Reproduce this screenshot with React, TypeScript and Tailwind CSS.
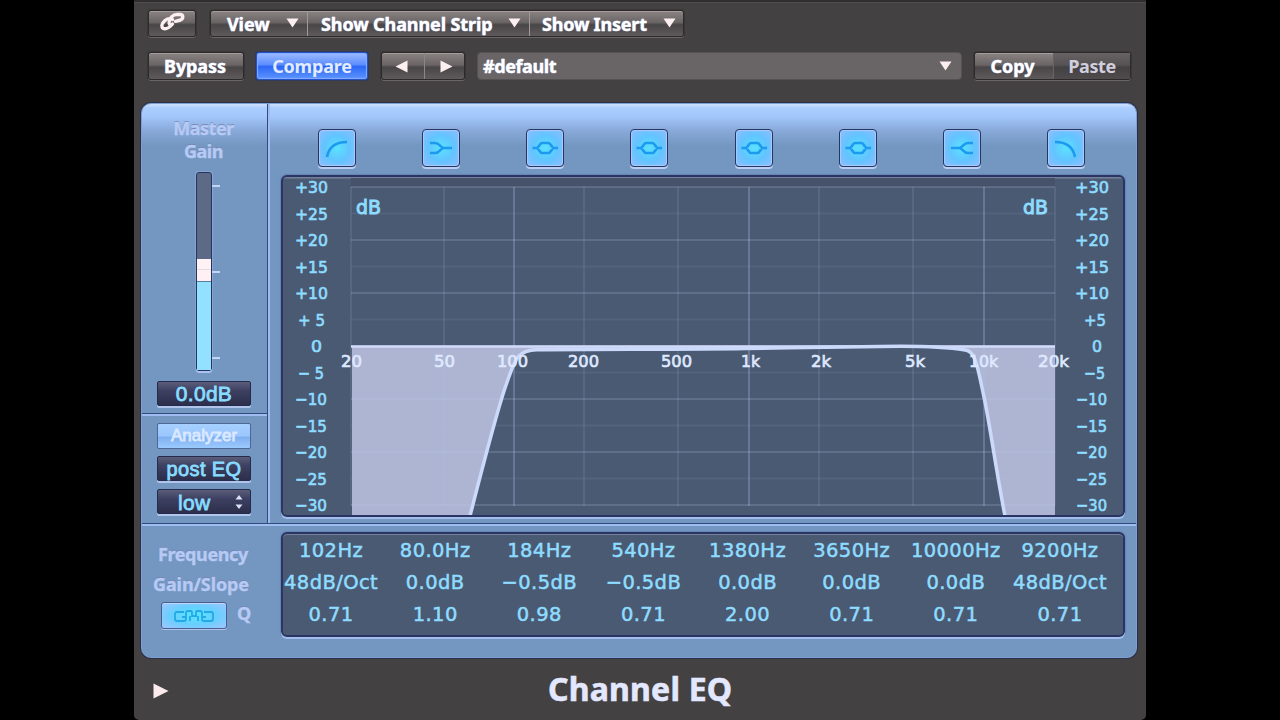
import type { ReactNode } from "react";

const RAISED =
  "flex items-center justify-center rounded-[3px] border border-[#2c2a2b] bg-[linear-gradient(180deg,#8b8384_0%,#6b6566_45%,#494647_55%,#5f5a5b_100%)] shadow-[inset_0_1px_0_#a59c9d,0_1px_0_#6a6667,0_0_0_1px_#393738]";
const TOOL_TEXT = "text-[18px] font-bold text-white [text-shadow:0_0_1px_#9fb7ff] [-webkit-text-stroke:0.3px_#ffffff]";
const LABEL = "font-bold text-[#b6caf5] [text-shadow:0_-1px_0_#7080ac] [-webkit-text-stroke:0.4px_#b6caf5]";
const FIELD =
  "flex h-[25px] w-[94px] items-center justify-center rounded-[2px] border border-[#252b4d] bg-[linear-gradient(180deg,#5b5d7a_0%,#3e4062_38%,#2c2e4b_100%)] font-['Liberation_Sans',sans-serif] text-[20px] leading-none text-[#88dcff] shadow-[0_2px_0_#b1c5ec] [-webkit-text-stroke:0.8px_#88dcff]";

const Down = () => (
  <svg width="13" height="10" viewBox="0 0 13 10">
    <path d="M0.5 0.5H12.5L6.5 9.5Z" fill="#fdeff0" />
  </svg>
);

const Side = ({ flip }: { flip?: boolean }) => (
  <svg width="13" height="13" viewBox="0 0 13 13" className={flip ? "rotate-180" : ""}>
    <path d="M0.5 0.5V12.5L12.5 6.5Z" fill="#fdeff0" />
  </svg>
);

function MenuItem({ label, className, text }: { label: string; className: string; text: string }) {
  return (
    <div className={`flex h-full items-center justify-between ${className}`}>
      <span className={`${TOOL_TEXT} ${text}`}>{label}</span>
      <span className="-mt-[2px] flex">
        <Down />
      </span>
    </div>
  );
}

function Toolbar() {
  return (
    <div className="flex h-[103px] flex-col pl-[14px] pt-[10px] leading-none">
      <div className="flex h-[27px]">
        <div className={`${RAISED} w-[48px]`}>
          <svg width="26" height="20" viewBox="0 0 26 20" fill="none" stroke="#fdeff0" strokeWidth="3.400" strokeLinecap="round" className="-mt-[3px]">
            <path d="M13.500 7.500C11 6 8.500 6.500 6 8.500L3.500 11.500C2 14 3 16.800 6 16.800C8.500 16.800 10.500 15.500 13.500 12" />
            <path d="M10.500 12C9.500 10 11 6.500 13 4.500C14.500 2.800 16 2.500 18 2.500H21.500C24.500 3 24.500 7 21.500 8L16.500 9.300" />
          </svg>
        </div>
        <div className={`${RAISED} ml-[14px] w-[474px]`}>
          <MenuItem label="View" className="w-[97px] border-r border-[#a09899] pl-[16px] pr-[8px]" text="tracking-[-0.1px]" />
          <MenuItem label="Show Channel Strip" className="w-[222px] border-r border-[#a09899] pl-[13px] pr-[8px]" text="tracking-[-0.1px]" />
          <MenuItem label="Show Insert" className="flex-1 pl-[12px] pr-[7px]" text="tracking-[-0.2px]" />
        </div>
      </div>
      <div className="mt-[15px] flex h-[28px]">
        <div className={`${RAISED} ${TOOL_TEXT} w-[96px] pb-px pr-[2px] tracking-[-0.1px]`}>Bypass</div>
        <div className="ml-[12px] flex w-[112px] items-center justify-center rounded-[3px] border border-[#2450c8] bg-[linear-gradient(180deg,#9dbbff_0%,#5c8cff_45%,#2c68f5_52%,#5c94ff_100%)] pb-px text-[18px] font-bold tracking-[-0.2px] text-[#e3ecff] shadow-[inset_0_0_1px_1px_#86adff,0_0_0_1px_#303b5e]">
          Compare
        </div>
        <div className={`${RAISED} ml-[13px] w-[84px]`}>
          <span className="flex h-full w-[43px] items-center justify-center border-r border-[#8d8687] pr-[3px]"><Side flip /></span>
          <span className="flex flex-1 items-center justify-center pl-[3px]"><Side /></span>
        </div>
        <div className={`${TOOL_TEXT} ml-[12px] flex w-[485px] items-center justify-between rounded-[4px] border border-[#555152] bg-[#696465] pb-px pl-[5px] pr-[9px] tracking-[-0.4px]`}>
          <span>#default</span>
          <Down />
        </div>
        <div className={`${RAISED} ml-[12px] w-[157px]`}>
          <span className={`${TOOL_TEXT} w-[78px] pb-px pr-[3px] text-center tracking-[0px]`}>Copy</span>
          <span className="flex h-full flex-1 items-center justify-center border-l border-[#676263] bg-[linear-gradient(180deg,#676263_0%,#575354_45%,#434142_55%,#4f4b4c_100%)] pb-px text-[18px] font-bold tracking-[-0.4px] text-[#d1cfdf]">
            Paste
          </span>
        </div>
      </div>
    </div>
  );
}

function Fader() {
  return (
    <div className="ml-[54px] mt-[9px] flex h-[199px]">
      <div className="flex w-[16px] flex-col rounded-[3px] border border-[#26355f] bg-[#5c6a85] shadow-[0_2px_0_#abc3ee,0_0_1px_1px_#8ba6cf]">
        <div className="h-[86px]" />
        <div className="h-[22px] bg-[linear-gradient(180deg,#fff2f4_0_10px,#eadbe2_10px_11px,#fff0f3_11px)]" />
        <div className="flex-1 border-t border-[#5780a4] bg-[#92e1ff]" />
      </div>
      <div className="flex w-[8px] flex-col justify-between pb-[12px] pt-[13px]">
        <i className="h-[2px] bg-[#c3d5f6]" />
        <i className="h-[2px] bg-[#c3d5f6]" />
        <i className="h-[2px] bg-[#c3d5f6]" />
      </div>
    </div>
  );
}

function Sidebar() {
  return (
    <div className="flex w-[126px] flex-col border-r border-[#324a7c]">
      <div className="flex h-[310px] flex-col border-b border-[#324a7c]">
        <div className={`${LABEL} pr-[2px] pt-[13px] text-center text-[18px] leading-[22.500px] tracking-[-0.5px]`}>
          Master
          <br />
          Gain
        </div>
        <div className="pt-px">
          <Fader />
        </div>
        <div className={`${FIELD} ml-[15px] mt-[10px]`}>
          <span className="text-[21px] tracking-[0.3px]">0.0dB</span>
        </div>
      </div>
      <div className="flex flex-1 flex-col border-t-2 border-[#9fbdf0] pl-[15px] pt-[7px]">
        <div className="flex h-[26px] w-[94px] items-center justify-center rounded-[2px] border border-[#4e6796] bg-[linear-gradient(180deg,#a6d0ff_0%,#9bc6ff_50%,#7fb0ef_55%,#9ccaff_100%)] font-['Liberation_Sans',sans-serif] text-[17px] text-[#dbe9ff] [-webkit-text-stroke:0.8px_#dbe9ff]">
          Analyzer
        </div>
        <div className={`${FIELD} mt-[7px] tracking-[0.4px]`}>post EQ</div>
        <div className={`${FIELD} mt-[8px]`}>
          <span className="flex-1 pl-[20px] pt-px text-[21px] tracking-[0.3px]">low</span>
          <svg width="8" height="16" viewBox="0 0 8 16" fill="#dbe2f5" className="mr-[7px]">
            <path d="M4 1L7.500 5.500H0.500ZM4 15L7.500 10.500H0.500Z" />
          </svg>
        </div>
      </div>
    </div>
  );
}

const PEAK = "M5.500 18H9.500C12 18 12.500 13 15 13H21.500C24 13 24.500 18 27 18H31M9.500 18C12 18 12.500 23 15 23H21.500C24 23 24.500 18 27 18";
const FILTERS = [
  "M8 27C10 16 17 12 28 12",
  "M7 13H12C17 13 17 18 21 18H29M7 23H12C17 23 17 18 21 18",
  PEAK,
  PEAK,
  PEAK,
  PEAK,
  "M29 13H24C19 13 19 18 15 18H7M29 23H24C19 23 19 18 15 18",
  "M7 12C18 12 25 16 27 27",
];

function FilterButton({ d }: { d: string }) {
  return (
    <div className="flex h-[38px] w-[38px] items-center justify-center rounded-[4px] border border-[#27375f] bg-[radial-gradient(circle,#5ae2ff_0%,#62c4ff_50%,#8fbcff_100%)] shadow-[inset_0_0_1px_1px_#a9caff,0_2px_0_#bacdf2]">
      <svg width="36" height="36" viewBox="0 0 36 36" fill="none" stroke="#1b9af0" strokeWidth="2.600">
        <path d={d} />
      </svg>
    </div>
  );
}

const CYAN = "#8edcff";
const VLINES = [351, 444, 514, 584, 678, 749, 819, 913, 984, 1055];
const LEFT_DB: [string, number, number][] = [
  ["+30", 295, 328], ["+25", 295, 328], ["+20", 295, 328], ["+15", 295, 328], ["+10", 295, 328],
  ["+ 5", 298, 325], ["0", 311, 322], ["− 5", 298, 324], ["−10", 295, 327], ["−15", 295, 327],
  ["−20", 295, 327], ["−25", 295, 327], ["−30", 295, 327],
];
const RIGHT_DB: [string, number, number][] = [
  ["+30", 1075, 1109], ["+25", 1075, 1109], ["+20", 1075, 1109], ["+15", 1075, 1109], ["+10", 1075, 1109],
  ["+5", 1084, 1106], ["0", 1092, 1102], ["−5", 1084, 1105], ["−10", 1076, 1107], ["−15", 1076, 1107],
  ["−20", 1076, 1107], ["−25", 1076, 1107], ["−30", 1076, 1107],
];
const FREQS: [string, number, number][] = [
  ["20", 341, 362], ["50", 434, 455], ["100", 497, 528], ["200", 568, 599], ["500", 661, 692],
  ["1k", 741, 760], ["2k", 811, 831], ["5k", 905, 925], ["10k", 969, 998], ["20k", 1038, 1069],
];

type ScaleLabel = { item: [string, number, number]; y: number; size: number; fill: string; weight?: number };

const ScaleText = ({ item, y, size, fill, weight = 0.7 }: ScaleLabel) => (
  <text x={item[1]} y={y} textLength={item[2] - item[1]} lengthAdjust="spacingAndGlyphs" fontSize={size} fill={fill} stroke={fill} strokeWidth={weight} xmlSpace="preserve">
    {item[0]}
  </text>
);

function Chart() {
  return (
    <div className="h-[342px] w-[844px] overflow-hidden rounded-[6px] border-2 border-[#2b3564] bg-[#4a5a73] shadow-[0_2px_0_#a3bdec,0_0_1px_1px_#6683b2]">
      <svg width="840" height="338" viewBox="283 177 840 338" className="font-['DejaVu_Sans',sans-serif]">
        <rect x="283" y="177" width="840" height="1.500" fill="#77809b" />
        <rect x="351" y="178" width="704" height="9" fill="#46516a" />
        <path d="M352 346.500H1055V515H1005C996 470 990 425 984 397C978 370 976 350 965 349.500C945 346 905 346 880 346.500C830 347 790 347.500 745 348.500C690 349.500 600 349 545 349.500C516 350 515 360 505 388C495 418 480 475 470 515H352Z" fill="#adb5d2" />
        {VLINES.map((x) => (
          <rect key={x} x={x - 1} y="187" width="2" height="319" fill="#aebee8" opacity={x === 514 || x === 749 || x === 984 ? 0.3 : 0.13} />
        ))}
        {LEFT_DB.map((_, i) => (
          <rect key={i} x="351" y={186 + i * 26.500} width="704" height="2" fill="#c4d0f5" opacity={i % 2 === 0 ? 0.18 : 0.08} />
        ))}
        <path d="M351 346.500H1055" stroke="#d2dcfa" strokeWidth="2.500" />
        <path d="M470 516C480 477 495 418 505 388C515 360 516 350 537 349.700C600 349 690 349.500 745 348.500C790 347.500 830 347 880 346.500C905 346 940 346 965 350C976 350.500 978 370 984 397C990 425 996 470 1005 516" fill="none" stroke="#ccd9fb" strokeWidth="3.500" />
        {LEFT_DB.map((t, i) => <ScaleText key={i} item={t} y={193 + i * 26.500} size={16.500} fill={CYAN} />)}
        {RIGHT_DB.map((t, i) => <ScaleText key={i} item={t} y={193 + i * 26.500} size={16.500} fill={CYAN} />)}
        {FREQS.map((t) => <ScaleText key={t[0]} item={t} y={367} size={16.500} fill="#dfe8ff" />)}
        <ScaleText item={["dB", 356, 381]} y={214} size={20} fill={CYAN} weight={1} />
        <ScaleText item={["dB", 1023, 1048]} y={214} size={20} fill={CYAN} weight={1} />
      </svg>
    </div>
  );
}

const BANDS = [
  ["102Hz", "48dB/Oct", "0.71"],
  ["80.0Hz", "0.0dB", "1.10"],
  ["184Hz", "−0.5dB", "0.98"],
  ["540Hz", "−0.5dB", "0.71"],
  ["1380Hz", "0.0dB", "2.00"],
  ["3650Hz", "0.0dB", "0.71"],
  ["10000Hz", "0.0dB", "0.71"],
  ["9200Hz", "48dB/Oct", "0.71"],
];

function Parameters() {
  return (
    <div className="flex flex-1 border-t-2 border-[#9fbdf0] pt-[6px]">
      <div className={`${LABEL} flex w-[139px] flex-col text-[18px] leading-[30px]`}>
        <div className="pl-[16px] pt-[7px] tracking-[-0.4px]">Frequency</div>
        <div className="pl-[11px] tracking-[-0.1px]">Gain/Slope</div>
        <div className="flex items-start pl-[19px] pt-[3px]">
          <div className="flex h-[27px] w-[66px] items-center justify-center rounded-[3px] border border-[#4a5e90] bg-[radial-gradient(ellipse,#58e6ff_0%,#67cfff_50%,#a0c6ff_100%)] shadow-[0_1px_0_#b1c5ec,inset_0_1px_0_#bcd6ff]">
            <svg width="42" height="16" viewBox="0 0 42 16" fill="none" stroke="#23a9e8" strokeWidth="1.800">
              <path d="M11 4H4Q2 4 2 6V11Q2 13 4 13H11Q13 13 13 11V9H9M31 4H38Q40 4 40 6V11Q40 13 38 13H31Q29 13 29 11V9H33M13 9V5Q13 3 15 3H18Q19 3 19 5V8H23V5Q23 3 24 3H27Q29 3 29 5V9M17 8V13M25 8V13" />
            </svg>
          </div>
          <span className="ml-[10px] -mt-[4px]">Q</span>
        </div>
      </div>
      <div className="h-[105px] w-[844px] rounded-[6px] border-2 border-[#2b3564] bg-[#4a5a73] shadow-[inset_0_1px_0_#77809b,0_2px_0_#a3bdec,0_0_1px_1px_#6683b2]">
        <div className="-ml-[4px] grid w-[833px] grid-cols-8 pt-px font-['DejaVu_Sans',sans-serif] text-[19.500px] leading-[32px] tracking-[0.400px] text-[#8edcff] [-webkit-text-stroke:0.5px_#8edcff]">
          {BANDS.map((band, i) => (
            <div key={i} className="flex min-w-0 flex-col items-center whitespace-nowrap">
              <span>{band[0]}</span>
              <span>{band[1]}</span>
              <span>{band[2]}</span>
            </div>
          ))}
        </div>
      </div>
    </div>
  );
}

const Frame = ({ children }: { children: ReactNode }) => (
  <div className="flex h-[720px] w-[1280px] justify-center overflow-hidden bg-black font-['Noto_Sans',sans-serif]">
    <div className="flex w-[1012px] flex-col rounded-b-[5px] border-t-2 border-[#302e2f] bg-[#434142] shadow-[inset_0_1px_0_#504d4e]">
      {children}
    </div>
  </div>
);

export default function App() {
  return (
    <Frame>
      <div className="-mt-[2px]">
        <Toolbar />
      </div>
      <div className="ml-[7px] flex h-[555px] w-[996px] flex-col rounded-[10px] border border-[#7c9fd4] bg-[linear-gradient(180deg,#cfe0ff_0px,#a9cdff_4px,#a4c8fb_12px,#89aadb_26px,#7397c0_42px,#7397c0_100%)] shadow-[0_0_0_1px_#2d3048]">
        <div className="flex h-[420px] border-b border-[#324a7c]">
          <Sidebar />
          <div className="flex flex-1 flex-col border-l-2 border-[#9fbdf0]">
            <div className="ml-[15px] flex h-[71px] w-[833px] pt-[25px]">
              {FILTERS.map((d, i) => (
                <div key={i} className="flex flex-1 justify-center">
                  <FilterButton d={d} />
                </div>
              ))}
            </div>
            <div className="pl-[11px]">
              <Chart />
            </div>
          </div>
        </div>
        <Parameters />
      </div>
      <div className="flex flex-1 items-center">
        <div className="flex w-[414px] pl-[19px] pt-[3px]">
          <svg width="16" height="16" viewBox="0 0 16 16">
            <path d="M0.500 0.500V15.500L15.500 8Z" fill="#fdeaec" />
          </svg>
        </div>
        <div className="text-[32px] font-bold leading-none tracking-[0.200px] text-[#e4e8ff] [-webkit-text-stroke:0.6px_#e4e8ff]">Channel EQ</div>
      </div>
    </Frame>
  );
}
